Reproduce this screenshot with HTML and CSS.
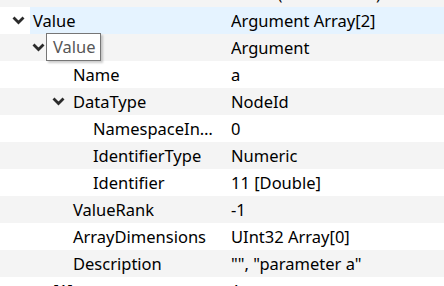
FILE: index.html
```html
<!doctype html>
<html lang="en">
<head>
    <meta charset="UTF-8">
    <title>Attributes</title>
    <link rel="stylesheet" href="styles.css">
</head>
<body>

<div class="tree">
    <div class="row">
        <div class="name lvl0"><span class="twisty"></span><span class="label">StatusCode</span></div>
        <div class="value">Good (0x00000000)</div>
    </div>
    <div class="row selected">
        <div class="name lvl0">
            <span class="twisty"><svg width="13" height="9" viewBox="0 0 13 9"><polyline points="1.5,1.5 6.5,6.5 11.5,1.5"/></svg></span>
            <span class="label">Value</span>
        </div>
        <div class="value">Argument Array[2]</div>
    </div>
    <div class="row">
        <div class="name lvl1">
            <span class="twisty"><svg width="13" height="9" viewBox="0 0 13 9"><polyline points="1.5,1.5 6.5,6.5 11.5,1.5"/></svg></span>
            <span class="label">[0]</span>
        </div>
        <div class="value">Argument</div>
    </div>
    <div class="row">
        <div class="name lvl2"><span class="twisty"></span><span class="label">Name</span></div>
        <div class="value">a</div>
    </div>
    <div class="row">
        <div class="name lvl2">
            <span class="twisty"><svg width="13" height="9" viewBox="0 0 13 9"><polyline points="1.5,1.5 6.5,6.5 11.5,1.5"/></svg></span>
            <span class="label">DataType</span>
        </div>
        <div class="value">NodeId</div>
    </div>
    <div class="row">
        <div class="name lvl3"><span class="twisty"></span><span class="label">NamespaceIndex</span></div>
        <div class="value">0</div>
    </div>
    <div class="row">
        <div class="name lvl3"><span class="twisty"></span><span class="label">IdentifierType</span></div>
        <div class="value">Numeric</div>
    </div>
    <div class="row">
        <div class="name lvl3"><span class="twisty"></span><span class="label">Identifier</span></div>
        <div class="value">11 [Double]</div>
    </div>
    <div class="row">
        <div class="name lvl2"><span class="twisty"></span><span class="label">ValueRank</span></div>
        <div class="value">-1</div>
    </div>
    <div class="row">
        <div class="name lvl2"><span class="twisty"></span><span class="label">ArrayDimensions</span></div>
        <div class="value">UInt32 Array[0]</div>
    </div>
    <div class="row">
        <div class="name lvl2"><span class="twisty"></span><span class="label">Description</span></div>
        <div class="value">"", "parameter a"</div>
    </div>
    <div class="row">
        <div class="name lvl1">
            <span class="twisty"><svg class="closed" width="12" height="10" viewBox="0 0 12 10"><polyline points="4,1 8,5 4,9"/></svg></span>
            <span class="label">[1]</span>
        </div>
        <div class="value">Argument</div>
    </div>
</div>

<div class="tooltip">Value</div>

</body>
</html>
```

FILE: styles.css
```css
html, body {
    margin: 0;
    padding: 0;
    background: #fff;
    overflow: hidden;
}

body {
    font-family: "Noto Sans", "Open Sans", sans-serif;
    font-size: 16.5px;
    color: #000;
}

.tree {
    margin-top: -20px;
}

.row {
    display: grid;
    grid-template-columns: 231px 1fr;
    height: 27px;
    line-height: 27px;
}

.row:nth-child(odd) {
    background: #f4f4f4;
}

.row.selected {
    background: linear-gradient(to right, #fff 30px, #e5f3ff 30px);
}

.name {
    display: flex;
    align-items: center;
    min-width: 0;
    padding-right: 16px;
}

.lvl0 { padding-left: 12px; }
.lvl1 { padding-left: 32px; }
.lvl2 { padding-left: 52px; }
.lvl3 { padding-left: 72px; }

.twisty {
    flex: none;
    width: 20px;
    height: 27px;
    display: flex;
    align-items: center;
}

.twisty svg polyline {
    fill: none;
    stroke: #2b2b2b;
    stroke-width: 2.8;
}

.twisty svg.closed polyline {
    stroke: #a0a0a0;
    stroke-width: 1.5;
}

.label {
    padding-left: 1px;
    white-space: nowrap;
    overflow: hidden;
    text-overflow: ellipsis;
}

.value {
    white-space: nowrap;
    overflow: hidden;
}

.tooltip {
    position: absolute;
    left: 46px;
    top: 33px;
    width: 55px;
    height: 28px;
    line-height: 26px;
    padding-left: 6px;
    box-sizing: border-box;
    background: #fff;
    border: 1px solid #767676;
    color: #575757;
    box-shadow: 2px 2px 2px rgba(0, 0, 0, 0.2);
}
```
